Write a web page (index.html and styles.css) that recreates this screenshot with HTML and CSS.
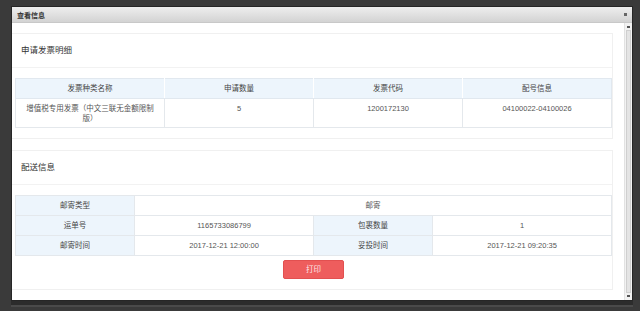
FILE: index.html
```html
<!DOCTYPE html>
<html lang="zh-CN">
<head>
    <meta charset="UTF-8">
    <title>查看信息</title>
    <link rel="stylesheet" href="styles.css">
</head>
<body>
    <div class="dialog">
        <div class="dialog-title">
            <span>查看信息</span>
            <i class="close"></i>
        </div>
        <div class="dialog-body">
            <div class="content">
                <div class="panel">
                    <div class="panel-head">申请发票明细</div>
                    <div class="panel-body">
                        <table class="grid">
                            <tr>
                                <th>发票种类名称</th>
                                <th>申请数量</th>
                                <th>发票代码</th>
                                <th>配号信息</th>
                            </tr>
                            <tr>
                                <td>增值税专用发票（中文三联无金额限制版）</td>
                                <td>5</td>
                                <td>1200172130</td>
                                <td>04100022-04100026</td>
                            </tr>
                        </table>
                    </div>
                </div>

                <div class="panel">
                    <div class="panel-head">配送信息</div>
                    <div class="panel-body">
                        <table class="info">
                            <colgroup>
                                <col class="c-label"><col class="c-value"><col class="c-label"><col class="c-value">
                            </colgroup>
                            <tr>
                                <th>邮寄类型</th>
                                <td colspan="3">邮寄</td>
                            </tr>
                            <tr>
                                <th>运单号</th>
                                <td>1165733086799</td>
                                <th>包裹数量</th>
                                <td>1</td>
                            </tr>
                            <tr>
                                <th>邮寄时间</th>
                                <td>2017-12-21 12:00:00</td>
                                <th>妥投时间</th>
                                <td>2017-12-21 09:20:35</td>
                            </tr>
                        </table>
                        <div class="actions">
                            <button class="print-btn">打印</button>
                        </div>
                    </div>
                </div>

                <div class="panel panel-last"></div>
            </div>
            <div class="scrollbar">
                <i class="arrow"></i>
                <div class="thumb"></div>
                <i class="arrow"></i>
            </div>
        </div>
    </div>
</body>
</html>
```

FILE: styles.css
```css
html, body {
    margin: 0;
    padding: 0;
}
body {
    width: 640px;
    height: 311px;
    overflow: hidden;
    background: #3a3a3a;
    padding: 7px 8px 0 12px;
    box-sizing: border-box;
    font-family: "Liberation Sans", "Noto Sans CJK SC", sans-serif;
}
.dialog {
    height: 293px;
    background: #fff;
    display: flex;
    flex-direction: column;
    box-shadow: 0 0 0 1px #262626, 0 4px 0 1px #2c2c2c, 0 6px 0 1px #4a4a4a;
}
.dialog-title {
    height: 16px;
    flex: none;
    display: flex;
    align-items: center;
    justify-content: space-between;
    padding: 0 5px 0 5px;
    background: linear-gradient(#eeeeee, #d3d3d3);
    border-bottom: 1px solid #c8c8c8;
    box-sizing: border-box;
    font-size: 7px;
    font-weight: bold;
    color: #333;
}
.close {
    width: 3px;
    height: 3px;
    background: #666;
}
.dialog-body {
    flex: 1;
    display: flex;
    min-height: 0;
}
.content {
    flex: 1;
    padding: 10px 11px 0 0;
    overflow: hidden;
}
.scrollbar {
    width: 8px;
    flex: none;
    background: #f2f2f2;
    border-left: 1px solid #e2e2e2;
    box-sizing: border-box;
    display: flex;
    flex-direction: column;
    align-items: center;
    padding: 3px 0;
}
.arrow {
    width: 3px;
    height: 2px;
    background: #555;
    flex: none;
}
.thumb {
    flex: 1;
    width: 5px;
    margin: 2px 0;
    background: #e4e4e4;
    border: 1px solid #cfcfcf;
    box-sizing: border-box;
}
.panel {
    border: 1px solid #f0f0f0;
    border-left: none;
    margin-bottom: 11px;
}
.panel-head {
    height: 33px;
    line-height: 33px;
    padding-left: 9px;
    border-bottom: 1px solid #f2f2f2;
    font-size: 8.5px;
    color: #333;
}
.panel-body {
    padding: 10px 0 10px 3px;
}
.panel-last {
    border-bottom: none;
    height: 10px;
}
table {
    width: 100%;
    border-collapse: collapse;
    table-layout: fixed;
    font-size: 7.5px;
    color: #555;
    text-align: center;
}
th, td {
    border: 1px solid #e4e8ec;
    font-weight: normal;
}
.grid th {
    padding: 0;
    line-height: 19px;
    background: #edf5fc;
    color: #444;
    border-color: #e1e8ef #fff #e1e8ef #fff;
}
.grid th:first-child {
    border-left-color: #e1e8ef;
}
.grid th:last-child {
    border-right-color: #e1e8ef;
}
.grid td {
    vertical-align: top;
    padding: 5px 8px 3px;
    line-height: 10px;
}
.info .c-label {
    width: 20%;
}
.info .c-value {
    width: 30%;
}
.info th, .info td {
    line-height: 19px;
    padding: 0;
}
.info th {
    background: #edf5fc;
    color: #444;
}
.actions {
    text-align: center;
    padding-top: 4px;
    line-height: 0;
}
.print-btn {
    width: 61px;
    height: 19px;
    border: 1px solid #e25050;
    border-radius: 2px;
    background: #ee5d5d;
    color: #fde8e8;
    font-family: inherit;
    font-size: 7.5px;
    line-height: 17px;
    padding: 0;
}
```
